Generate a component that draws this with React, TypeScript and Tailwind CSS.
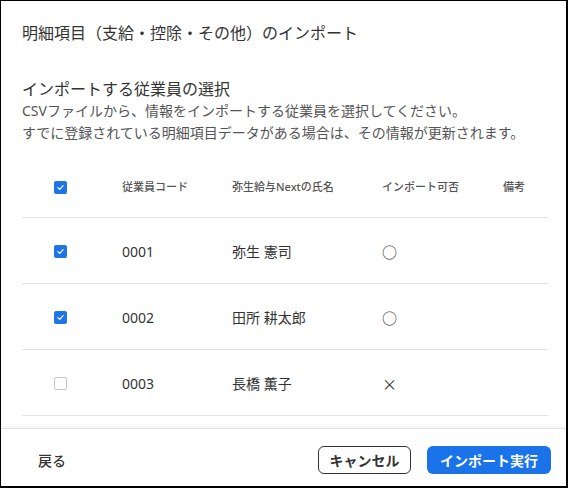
const font = { fontFamily: '"Noto Sans", "Noto Sans CJK JP", sans-serif' };
const cjk = { fontFamily: '"Noto Sans CJK JP", sans-serif' };

type Row = { code: string; name: string; ok: boolean; checked: boolean };

const rows: Row[] = [
  { code: '0001', name: '弥生 憲司', ok: true, checked: true },
  { code: '0002', name: '田所 耕太郎', ok: true, checked: true },
  { code: '0003', name: '長橋 薫子', ok: false, checked: false },
];

function Check({ checked }: { checked: boolean }) {
  if (!checked) {
    return <span className="block h-[13px] w-[13px] rounded-[2px] border border-[#c8c8c8] bg-white" />;
  }
  return (
    <span className="flex h-[13px] w-[13px] items-center justify-center rounded-[2px] bg-[#1f74e6]">
      <svg viewBox="0 0 12 12" className="h-[9px] w-[9px]" fill="none" stroke="white" strokeWidth="1.6" strokeLinecap="round" strokeLinejoin="round">
        <path d="M2.5 6.2 5 8.5 9.5 3.5" />
      </svg>
    </span>
  );
}

const cols = 'grid grid-cols-[100px_110px_150px_121px_1fr] items-center';

export default function App() {
  return (
    <div
      style={font}
      className="flex h-[488px] w-[568px] flex-col border-l border-t border-r-2 border-b-2 border-black bg-white text-[#333]"
    >
      <div className="flex-1 overflow-hidden pl-[21px] pr-[18px]">
        <h1 className="pt-5 text-[16px] leading-6">明細項目（支給・控除・その他）のインポート</h1>
        <h2 className="mt-[33px] text-[16px] leading-[22px]">インポートする従業員の選択</h2>
        <p className="text-[14px] leading-[22px] text-[#555]">
          CSVファイルから、情報をインポートする従業員を選択してください。
          <br />
          すでに登録されている明細項目データがある場合は、その情報が更新されます。
        </p>

        <div className="mt-[14px]">
          <div className={`${cols} h-[60px] border-b border-[#e3e3e3] text-[11px] font-medium text-[#555]`}>
            <div className="pl-[32px]">
              <Check checked />
            </div>
            <div>従業員コード</div>
            <div>弥生給与Nextの氏名</div>
            <div>インポート可否</div>
            <div>備考</div>
          </div>
          {rows.map((r) => (
            <div key={r.code} className={`${cols} h-[66px] border-b border-[#e3e3e3] pt-[2px] text-[14px]`}>
              <div className="pl-[32px]">
                <Check checked={r.checked} />
              </div>
              <div>{r.code}</div>
              <div>{r.name}</div>
              <div style={cjk} className="text-[15px] leading-none">
                {r.ok ? '○' : '×'}
              </div>
              <div />
            </div>
          ))}
        </div>
      </div>

      <div className="flex h-[58px] shrink-0 items-start justify-between border-t border-[#e0e0e0] pl-[21px] pr-[15px] pt-[17px] shadow-[0_-2px_4px_rgba(0,0,0,0.05)]">
        <button type="button" className="h-7 px-4 text-[14px] font-medium text-[#333]">
          戻る
        </button>
        <div className="flex gap-4">
          <button
            type="button"
            className="h-7 w-[93px] rounded-md border border-[#333] bg-white text-[14px] font-bold text-[#333]"
          >
            キャンセル
          </button>
          <button
            type="button"
            className="h-7 w-[124px] rounded-md bg-[#1a73e8] text-[14px] font-bold text-white"
          >
            インポート実行
          </button>
        </div>
      </div>
    </div>
  );
}
